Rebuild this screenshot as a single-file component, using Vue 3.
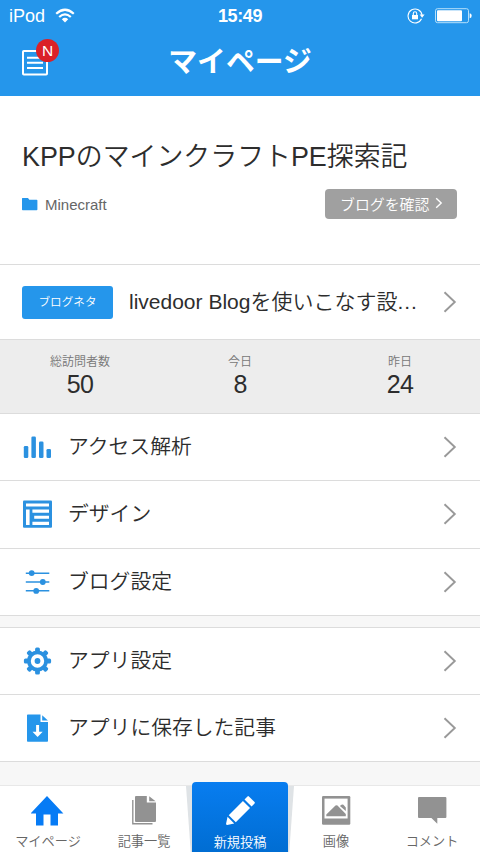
<script setup>
const stats = [
  { label: '総訪問者数', value: 50 },
  { label: '今日', value: 8 },
  { label: '昨日', value: 24 },
]
const blogMenu = [
  { icon: 'chart', label: 'アクセス解析' },
  { icon: 'design', label: 'デザイン' },
  { icon: 'sliders', label: 'ブログ設定' },
]
const appMenu = [
  { icon: 'gear', label: 'アプリ設定' },
  { icon: 'saved', label: 'アプリに保存した記事' },
]
const groups = [blogMenu, appMenu]
const teeth = [0, 45, 90, 135, 180, 225, 270, 315]
</script>

<template>
  <div class="screen">
    <header class="header">
      <div class="status">
        <div class="carrier">
          <span>iPod</span>
          <svg width="20" height="16" viewBox="0 0 20 16" fill="none" stroke="#fff" stroke-width="2.2">
            <path d="M1.2 5.7Q10-2.2 18.8 5.7" />
            <path d="M4.2 9Q10 3.8 15.8 9" />
            <path d="M6.8 11.2Q10 8.5 13.2 11.2L10 14.5Z" fill="#fff" stroke="none" />
          </svg>
        </div>
        <span class="clock">15:49</span>
        <div class="indicators">
          <svg width="18" height="16" viewBox="0 0 18 16" fill="none" stroke="#fff" stroke-width="1.1">
            <path d="M14.5 10.8A7 7 0 1 1 15 7" />
            <path d="M12.6 6.5h5L15.1 9.8Z" fill="#fff" stroke="none" />
            <path d="M5 7h6v4.3H5Z" fill="#fff" stroke="none" />
            <path d="M6.3 7V5.4a1.7 1.7 0 0 1 3.4 0V7" />
          </svg>
          <svg class="battery" width="37" height="16" viewBox="0 0 37 16">
            <rect x=".5" y=".7" width="33" height="14" rx="2" fill="none" stroke="#b5e0fb" />
            <rect x="2" y="2.2" width="25" height="11" rx="1" fill="#fff" />
            <path d="M34.7 5.2q2 .3 2 2.5t-2 2.5Z" fill="#fff" />
          </svg>
        </div>
      </div>
      <div class="titlebar">
        <div class="news">
          <svg width="26" height="26" viewBox="0 0 26 26" fill="none" stroke="#fff">
            <rect x="1" y="1" width="24" height="23.5" rx=".8" stroke-width="2" />
            <path d="M5 7.7h16M5 12.8h16M5 18h16" stroke-width="2" />
          </svg>
          <span class="badge">N</span>
        </div>
        <h1>マイページ</h1>
      </div>
    </header>

    <section class="blog">
      <h2>KPPのマインクラフトPE探索記</h2>
      <div class="blog-meta">
        <div class="category">
          <svg width="16" height="13" viewBox="0 0 16 13"><path d="M.5 0H6l1.3 1.7h7.3q.8 0 .8.8v9q0 .7-.8.7H.7q-.7 0-.7-.7V.5Q0 0 .5 0Z" fill="#2596eb" /></svg>
          <span>Minecraft</span>
        </div>
        <button class="confirm">
          <span>ブログを確認</span>
          <svg width="8" height="12" viewBox="0 0 8 12" fill="none" stroke="#fff" stroke-width="1.4"><path d="M1.2 1.2 6.2 6 1.2 10.8" /></svg>
        </button>
      </div>
    </section>

    <section class="topic">
      <span class="tag">ブログネタ</span>
      <span class="topic-text">livedoor Blogを使いこなす設<i>...</i></span>
      <svg class="chevron" width="14" height="22" viewBox="0 0 14 22"><path d="M1.5 1.2 11.8 11 1.5 20.8" /></svg>
    </section>

    <section class="stats">
      <div v-for="s in stats" :key="s.label" class="stat">
        <span class="stat-label">{{ s.label }}</span>
        <strong>{{ s.value }}</strong>
      </div>
    </section>

    <nav v-for="(group, g) in groups" :key="g" class="menu">
      <div v-for="item in group" :key="item.label" class="row">
        <svg class="icon" width="30" height="30" viewBox="0 0 30 30" fill="#2b91e0">
          <g v-if="item.icon === 'chart'">
            <rect x="1.8" y="14" width="4.5" height="12" rx="1.3" />
            <rect x="9.4" y="4.5" width="4.5" height="21.5" rx="1.3" />
            <rect x="17" y="9.5" width="4.5" height="16.5" rx="1.3" />
            <rect x="24.5" y="17" width="4.5" height="9" rx="1.3" />
          </g>
          <g v-else-if="item.icon === 'design'">
            <rect x="1" y="1.5" width="29" height="27.3" rx="1" />
            <path d="M4 4.5h23v3H4zM4 10.5h3.6v15.4H4zM10.4 10.5H27v3.2H10.4zM12.2 16.7H27v3H12.2zM10.4 22.8H27v3.1H10.4z" fill="#fff" />
          </g>
          <g v-else-if="item.icon === 'sliders'">
            <path d="M3.8 5.4h23.5v1.5H3.8zM3.8 14.2h23.5v1.5H3.8zM3.8 23.1h23.5v1.5H3.8z" />
            <circle cx="9.7" cy="6.1" r="2.9" /><circle cx="20.8" cy="15" r="2.9" /><circle cx="14.2" cy="23.9" r="2.9" />
          </g>
          <g v-else-if="item.icon === 'gear'" transform="translate(15.5 15)">
            <path v-for="t in teeth" :key="t" d="M-2.4-9V-12Q-2.4-13.6-.9-13.6H.9Q2.4-13.6 2.4-12V-9Z" :transform="`rotate(${t})`" />
            <circle r="8.6" fill="#fff" stroke="#2b91e0" stroke-width="3.8" />
            <circle r="2.9" />
          </g>
          <g v-else>
            <path d="M5.8 1.5H18.5V9H26V28q0 .8-.8.8H5.8q-.8 0-.8-.8V2.3q0-.8.8-.8Z" fill="#2596eb" />
            <path d="M20.2 2.2 25.9 7.4H20.2Z" fill="#2596eb" />
            <path d="M14.1 12h3v6.8h3.6L15.6 24l-5.1-5.2h3.6Z" fill="#fff" />
          </g>
        </svg>
        <span class="label">{{ item.label }}</span>
        <svg class="chevron" width="14" height="22" viewBox="0 0 14 22"><path d="M1.5 1.2 11.8 11 1.5 20.8" /></svg>
      </div>
    </nav>

    <div class="spacer"></div>

    <footer class="tabs">
      <div class="tab">
        <svg width="34" height="32" viewBox="0 0 34 32"><path d="M16 1 32.4 18.5H27V30.5H19.5V19.5h-7V30.5H5V18.5H-.4Z" fill="#067bf5" /></svg>
        <span>マイページ</span>
      </div>
      <div class="tab">
        <svg width="34" height="32" viewBox="0 0 34 32">
          <path d="M9 1H19.8V7.5H29V26q0 1-1 1H9q-1 0-1-1V2Q8 1 9 1ZM22.2 1.2 28.6 6.2H22.2Z" fill="#929292" />
          <path d="M5.8 5V28.7H25.5" fill="none" stroke="#929292" stroke-width="1.4" />
        </svg>
        <span>記事一覧</span>
      </div>
      <div class="tab compose">
        <svg width="34" height="34" viewBox="0 0 34 34" fill="#fff">
          <g transform="translate(16 18) rotate(45)">
            <path d="M-5-17Q-5-18-4-18H4Q5-18 5-17V-12.8H-5ZM-5-10.6H5V9.5H-5ZM-4.7 11.5H4.7L.8 17.5Q0 18.5-.8 17.5Z" />
          </g>
        </svg>
        <span>新規投稿</span>
      </div>
      <div class="tab">
        <svg width="34" height="32" viewBox="0 0 34 32">
          <rect x="3" y="1" width="28.3" height="28.7" rx="1.2" fill="#929292" />
          <path d="M5.5 3.6H28.6V23.5H5.5Z" fill="#fff" />
          <path d="M7.3 21.3V19.5L16.5 10.6q1-.7 2 0L26.8 19v2.3ZM20.9 11q2-1.8 3.5-1.3L26.8 12.5v3.6Z" fill="#929292" />
        </svg>
        <span>画像</span>
      </div>
      <div class="tab">
        <svg width="34" height="32" viewBox="0 0 34 32"><path d="M4 2H30.4q1 0 1 1V22q0 1-1 1H22.3V28.7L16.4 23H4Q3 23 3 22V3Q3 2 4 2Z" fill="#929292" /></svg>
        <span>コメント</span>
      </div>
    </footer>
  </div>
</template>

<style>
body { margin: 0; background: #f7f7f7; }
</style>

<style scoped>
* { box-sizing: border-box; }
.screen {
  width: 480px;
  height: 852px;
  display: flex;
  flex-direction: column;
  overflow: hidden;
  background: #f7f7f7;
  color: #2d2d2d;
  font-family: "Liberation Sans", "Noto Sans CJK JP", sans-serif;
  font-weight: 350;
  white-space: nowrap;
}
svg { display: block; flex: none; }
h1, h2 { margin: 0; }
.header { height: 96px; flex: none; background: #2596eb; color: #fff; }
.status {
  height: 32px;
  display: grid;
  grid-template-columns: 1fr auto 1fr;
  align-items: center;
  padding: 0 8px;
}
.carrier { display: flex; align-items: center; gap: 10px; padding-left: 1px; font-size: 18px; line-height: 32px; }
.clock { font-size: 18px; font-weight: bold; line-height: 32px; letter-spacing: -.4px; }
.indicators { display: flex; justify-content: flex-end; align-items: center; gap: 10px; }
.titlebar { height: 64px; position: relative; display: flex; justify-content: center; }
h1 { font-size: 28.8px; line-height: 61px; font-weight: bold; }
.news { position: absolute; left: 22px; top: 18px; }
.badge {
  position: absolute;
  left: 14px;
  top: -11px;
  width: 23px;
  height: 23px;
  border-radius: 50%;
  background: #da2128;
  font-size: 15.5px;
  font-weight: 400;
  line-height: 24px;
  text-align: center;
}
.blog {
  height: 169px;
  flex: none;
  padding: 39px 23px 0 22px;
  background: #fff;
  border-bottom: 1px solid #dcdcdc;
}
h2 { font-size: 26.9px; line-height: 44px; font-weight: 350; }
.blog-meta { display: flex; justify-content: space-between; align-items: center; margin-top: 10px; height: 30px; }
.category { display: flex; align-items: center; gap: 7px; color: #666; font-size: 15px; line-height: 30px; }
.category span { padding-top: 1px; }
.confirm {
  width: 132px;
  height: 30px;
  display: flex;
  align-items: center;
  gap: 6px;
  padding: 0 0 2px 15px;
  border: 0;
  border-radius: 4px;
  background: #a0a0a0;
  color: #fff;
  font: inherit;
  font-size: 14.9px;
}
.topic {
  height: 75px;
  flex: none;
  display: flex;
  align-items: center;
  padding: 0 23px 0 22px;
  background: #fff;
  border-bottom: 1px solid #dcdcdc;
}
.tag {
  width: 91px;
  height: 33px;
  border-radius: 3px;
  background: #2596eb;
  color: #fff;
  font-size: 11.6px;
  line-height: 32px;
  text-align: center;
}
.topic-text { margin-left: 16px; flex: 1; font-size: 21px; line-height: 32px; }
.topic-text i { font-style: normal; letter-spacing: 1px; }
.chevron { margin-left: auto; fill: none; stroke: #999; stroke-width: 1.9; }
.stats {
  height: 74px;
  flex: none;
  display: grid;
  grid-template-columns: repeat(3, 1fr);
  background: #ededed;
  border-bottom: 1px solid #dcdcdc;
}
.stat { display: flex; flex-direction: column; align-items: center; padding-top: 14px; }
.stat-label { color: #777; font-size: 12px; line-height: 17px; }
.stat strong { font-size: 25px; line-height: 27px; font-weight: normal; letter-spacing: -.7px; }
.menu { background: #fff; flex: none; }
.menu + .menu { margin-top: 11px; border-top: 1px solid #dcdcdc; }
.row {
  height: 67.3px;
  display: flex;
  align-items: center;
  padding: 0 23px 0 22px;
  border-bottom: 1px solid #dcdcdc;
}
.label { margin-left: 16px; font-size: 20.8px; line-height: 32px; }
.spacer { flex: 1; }
.tabs {
  height: 67px;
  flex: none;
  display: grid;
  grid-template-columns: repeat(5, 1fr);
  background: #fff;
  border-top: 1px solid #e8e8e8;
}
.tab {
  display: flex;
  flex-direction: column;
  align-items: center;
  padding-top: 9px;
  color: #666;
  font-size: 13.2px;
}
.tab span { line-height: 20px; margin-top: 5px; }
.tab.compose {
  position: relative;
  margin-top: -4px;
  padding-top: 12px;
  height: 71px;
  border-radius: 4px 4px 0 0;
  background: linear-gradient(#087df0, #006dd2);
  color: #fff;
}
.compose::before,
.compose::after {
  content: "";
  position: absolute;
  top: 4px;
  bottom: 0;
  width: 6px;
  background: #dfe3e6;
}
.compose::before { right: 100%; clip-path: polygon(0 0, 100% 0, 100% 100%, 80% 100%); }
.compose::after { left: 100%; clip-path: polygon(0 0, 100% 0, 20% 100%, 0 100%); }
</style>
